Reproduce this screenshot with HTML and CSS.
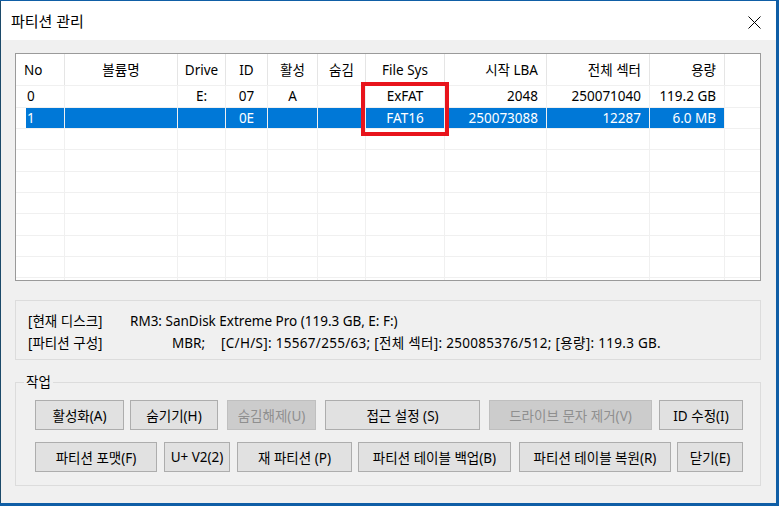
FILE: index.html
```html
<!DOCTYPE html>
<html lang="ko">
<head>
<meta charset="utf-8">
<title>파티션 관리</title>
<link rel="stylesheet" href="styles.css">
</head>
<body>
<div class="window">
  <div class="titlebar">
    <span class="title">파티션 관리</span>
    <svg class="close" width="13" height="13" viewBox="0 0 13 13"><path d="M0.5 0.5 L12.5 12.5 M12.5 0.5 L0.5 12.5" stroke="#000" stroke-width="1" fill="none"/></svg>
  </div>
  <div class="content">
    <div class="list">
      <div class="row head">
        <div class="c l">No</div><div class="c">볼륨명</div><div class="c">Drive</div><div class="c">ID</div><div class="c">활성</div><div class="c">숨김</div><div class="c">File Sys</div><div class="c r">시작 LBA</div><div class="c r">전체 섹터</div><div class="c r">용량</div><div class="c f"></div>
      </div>
      <div class="row">
        <div class="c d">0</div><div class="c"></div><div class="c">E:</div><div class="c">07</div><div class="c">A</div><div class="c"></div><div class="c">ExFAT</div><div class="c r">2048</div><div class="c r">250071040</div><div class="c r">119.2 GB</div><div class="c f"></div>
      </div>
      <div class="row sel">
        <div class="c d">1</div><div class="c"></div><div class="c"></div><div class="c">0E</div><div class="c"></div><div class="c"></div><div class="c">FAT16</div><div class="c r">250073088</div><div class="c r">12287</div><div class="c r">6.0 MB</div><div class="c f"></div>
      </div>
      <div class="row"><div class="c"></div><div class="c"></div><div class="c"></div><div class="c"></div><div class="c"></div><div class="c"></div><div class="c"></div><div class="c"></div><div class="c"></div><div class="c"></div><div class="c f"></div></div>
      <div class="row"><div class="c"></div><div class="c"></div><div class="c"></div><div class="c"></div><div class="c"></div><div class="c"></div><div class="c"></div><div class="c"></div><div class="c"></div><div class="c"></div><div class="c f"></div></div>
      <div class="row"><div class="c"></div><div class="c"></div><div class="c"></div><div class="c"></div><div class="c"></div><div class="c"></div><div class="c"></div><div class="c"></div><div class="c"></div><div class="c"></div><div class="c f"></div></div>
      <div class="row"><div class="c"></div><div class="c"></div><div class="c"></div><div class="c"></div><div class="c"></div><div class="c"></div><div class="c"></div><div class="c"></div><div class="c"></div><div class="c"></div><div class="c f"></div></div>
      <div class="row"><div class="c"></div><div class="c"></div><div class="c"></div><div class="c"></div><div class="c"></div><div class="c"></div><div class="c"></div><div class="c"></div><div class="c"></div><div class="c"></div><div class="c f"></div></div>
      <div class="row"><div class="c"></div><div class="c"></div><div class="c"></div><div class="c"></div><div class="c"></div><div class="c"></div><div class="c"></div><div class="c"></div><div class="c"></div><div class="c"></div><div class="c f"></div></div>
      <div class="row"><div class="c"></div><div class="c"></div><div class="c"></div><div class="c"></div><div class="c"></div><div class="c"></div><div class="c"></div><div class="c"></div><div class="c"></div><div class="c"></div><div class="c f"></div></div>
      <div class="row"><div class="c"></div><div class="c"></div><div class="c"></div><div class="c"></div><div class="c"></div><div class="c"></div><div class="c"></div><div class="c"></div><div class="c"></div><div class="c"></div><div class="c f"></div></div>
      <div class="mark"></div>
    </div>

    <div class="info">
      <div class="lbl">[현재 디스크]</div>
      <div class="val">RM3: SanDisk Extreme Pro (119.3 GB, E: F:)</div>
      <div class="lbl">[파티션 구성]</div>
      <div class="val"><span class="mbr">MBR;</span><span class="geo">[C/H/S]: 15567/255/63; [전체 섹터]: 250085376/512; [용량]: 119.3 GB.</span></div>
    </div>

    <fieldset class="group">
      <legend>작업</legend>
      <div class="brows">
        <div class="brow">
          <button class="btn w89">활성화(A)</button>
          <button class="btn w88 m6">숨기기(H)</button>
          <button class="btn w89 m9" disabled>숨김해제(U)</button>
          <button class="btn w155 m9">접근 설정 (S)</button>
          <button class="btn w163 m9" disabled>드라이브 문자 제거(V)</button>
          <button class="btn w84 m7">ID 수정(I)</button>
        </div>
        <div class="brow">
          <button class="btn w122">파티션 포맷(F)</button>
          <button class="btn w66 m7">U+ V2(2)</button>
          <button class="btn w115 m7">재 파티션 (P)</button>
          <button class="btn w153 m6">파티션 테이블 백업(B)</button>
          <button class="btn w152 m8">파티션 테이블 복원(R)</button>
          <button class="btn w66 m6">닫기(E)</button>
        </div>
      </div>
    </fieldset>
  </div>
</div>
</body>
</html>
```

FILE: styles.css
```css
html, body {
  margin: 0;
  padding: 0;
}

body {
  width: 779px;
  height: 506px;
  overflow: hidden;
  background: #0f5ea6;
  font-family: "Noto Sans", "Noto Sans CJK KR", sans-serif;
  font-size: 13.5px;
  color: #000;
}

.window {
  margin-top: 1px;
  width: 775px;
  height: 502px;
  border-left: 1px solid #1c4a6a;
  background: #f0f0f0;
  display: flex;
  flex-direction: column;
}

.titlebar {
  height: 39px;
  flex: none;
  background: #fff;
  display: flex;
  align-items: center;
  justify-content: space-between;
  padding: 0 15px 0 10px;
}

.title {
  font-size: 15px;
  line-height: 20px;
}

.close {
  display: block;
  margin-top: 3px;
}

.content {
  padding: 13px 15px 0 14px;
}

/* list view */
.list {
  position: relative;
  height: 228px;
  box-sizing: border-box;
  border: 1px solid #9a9a9a;
  background: #fff;
  overflow: hidden;
}

.row {
  display: grid;
  grid-template-columns: 49px 113px 48px 42px 50px 48px 79px 102px 103px 75px 1fr;
  height: 21.333px;
  box-sizing: border-box;
  border-top: 1px solid #f0f0f0;
}

.row.head {
  height: 31.333px;
  border-top: 0;
}

.c {
  box-sizing: border-box;
  border-right: 1px solid #f0f0f0;
  text-align: center;
  line-height: 20.333px;
  white-space: nowrap;
  overflow: hidden;
}

.head .c {
  border-right-color: #e5e5e5;
  line-height: 29.333px;
  padding-top: 2px;
}

.c.l {
  text-align: left;
  padding-left: 8px;
}

.c.d {
  text-align: left;
  padding-left: 11px;
}

.c.r {
  text-align: right;
  padding-right: 8px;
}

.c.f {
  border-right: 0;
}

.row.sel .c {
  background: #0078d7;
  color: #fff;
}

.row.sel .c.d {
  background: linear-gradient(to right, #fff 10px, #0078d7 10px);
}

.row.sel .c.f {
  background: #fff;
}

.mark {
  position: absolute;
  left: 345px;
  top: 28px;
  width: 88px;
  height: 54px;
  box-sizing: border-box;
  border: 4px solid #e8141c;
}

/* info frame */
.info {
  margin-top: 19px;
  height: 60px;
  box-sizing: border-box;
  border: 1px solid #dcdcdc;
  padding: 14px 12px 0;
  display: grid;
  grid-template-columns: 102px auto;
  line-height: 12.5px;
  white-space: nowrap;
}

.mbr {
  display: inline-block;
  width: 49px;
  margin-left: 42px;
}

.geo {
  letter-spacing: 0.3px;
}

/* group box */
.group {
  margin: 14px 0 0;
  padding: 0 0 13px;
  border: 1px solid #dcdcdc;
  min-width: 0;
}

.group legend {
  margin-left: 8px;
  padding: 0 2px;
  line-height: 16px;
}

.brows {
  padding: 10px 0 0 19px;
  display: flex;
  flex-direction: column;
  gap: 12px;
}

.brow {
  display: flex;
}

.btn {
  height: 30px;
  box-sizing: border-box;
  border: 1px solid #adadad;
  background: #e1e1e1;
  font-family: inherit;
  font-size: 13.5px;
  color: #000;
  padding: 0;
  white-space: nowrap;
}

.btn:disabled {
  background: #cccccc;
  border-color: #bfbfbf;
  color: #8f8f8f;
}

.w66 { width: 66px; }
.w84 { width: 84px; }
.w88 { width: 88px; }
.w89 { width: 89px; }
.w115 { width: 115px; }
.w122 { width: 122px; }
.w152 { width: 152px; }
.w153 { width: 153px; }
.w155 { width: 155px; }
.w163 { width: 163px; }

.m6 { margin-left: 6px; }
.m7 { margin-left: 7px; }
.m8 { margin-left: 8px; }
.m9 { margin-left: 9px; }
```
